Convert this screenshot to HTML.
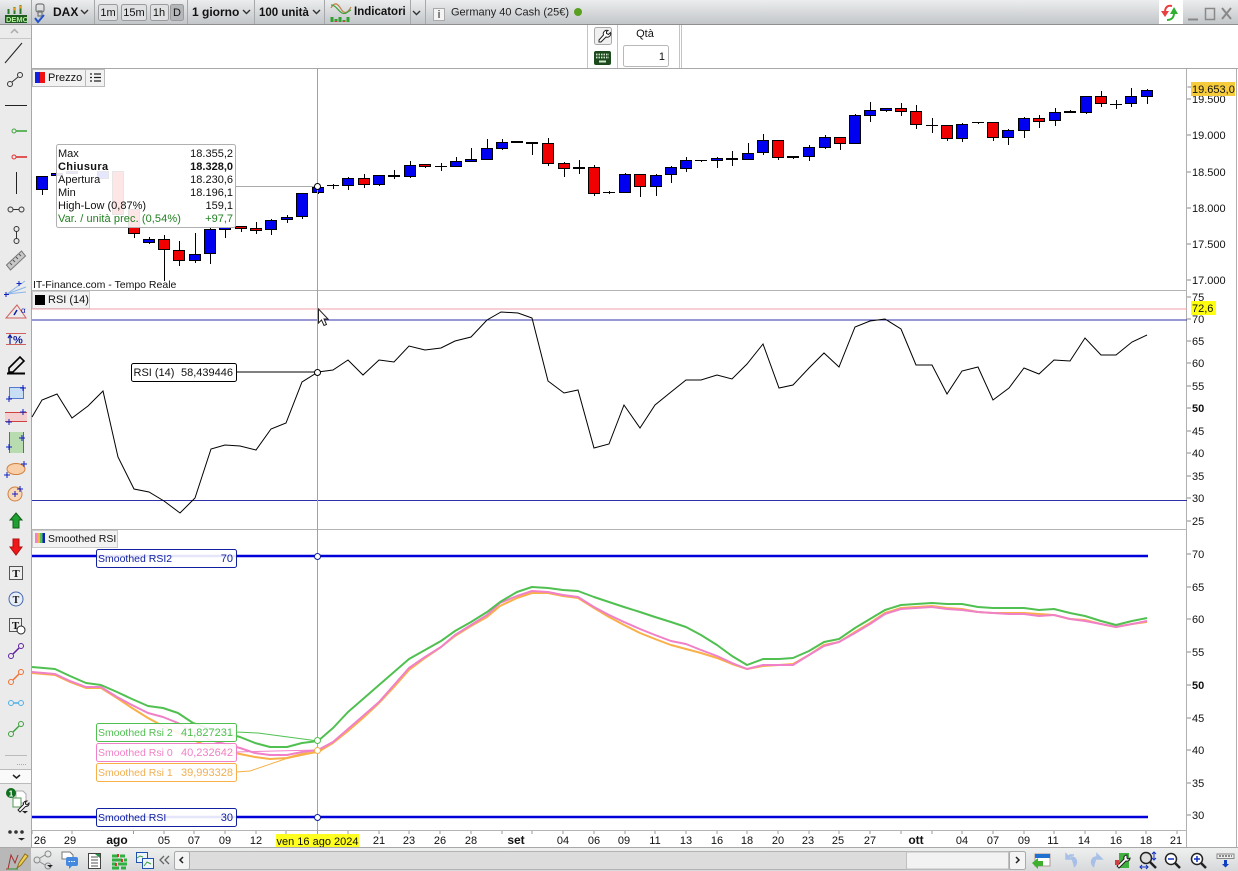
<!DOCTYPE html>
<html lang="it"><head><meta charset="utf-8"><title>DAX</title>
<style>html,body{margin:0;padding:0;background:#fff;width:1238px;height:871px;overflow:hidden}svg{display:block}text{font-family:"Liberation Sans",sans-serif;font-size:11px;fill:#111}.b{font-weight:bold}.e{text-anchor:end}.m{text-anchor:middle}.s{font-size:12px;font-weight:bold}.n{font-size:10.5px}</style></head><body>
<svg width="1238" height="871" viewBox="0 0 1238 871" xmlns="http://www.w3.org/2000/svg">
<defs>
<linearGradient id="g" x1="0" y1="0" x2="0" y2="1"><stop offset="0" stop-color="#ebedee"/><stop offset="1" stop-color="#c3c6c9"/></linearGradient>
<linearGradient id="g2" x1="0" y1="0" x2="0" y2="1"><stop offset="0" stop-color="#f0f0f0"/><stop offset="1" stop-color="#d8d9da"/></linearGradient>
<linearGradient id="rb" x1="0" y1="0" x2="1" y2="0"><stop offset=".5" stop-color="#1020e0"/><stop offset=".5" stop-color="#f01010"/></linearGradient>
</defs>
<rect width="1238" height="871" fill="#fff"/>
<!-- left toolbar -->
<rect x="0" y="25" width="31" height="822" fill="#ebebeb"/>
<path d="M31.5 25V847" stroke="#a8a8a8"/>
<!-- top bar -->
<rect width="1238" height="24" fill="url(#g)"/>
<path d="M0 24.5H1238" stroke="#8f8f8f"/>
<path d="M31.5 0V24M94.5 0V24M187.5 0V24M254.5 0V24M324.5 0V24M410.5 0V24M425.5 0V24" stroke="#a6a8aa"/>
<!-- demo icon -->
<rect x="5" y="15" width="22" height="8" fill="#1d5a1d"/><text x="6" y="22" style="font-size:7.5px;font-weight:bold;fill:#b8f0a0">DEMO</text>
<path d="M8.5 9V14M14.5 7V14M20.5 5V14" stroke="#2b7a2b" stroke-width="2"/><circle cx="14.5" cy="9" r="1.5" fill="#e8a020"/><circle cx="20.5" cy="7" r="1.5" fill="#e8a020"/>
<!-- link icon -->
<path d="M38 4h4a2 2 0 012 2v4a2 2 0 01-2 2h-4a2 2 0 01-2-2V6a2 2 0 012-2zM38 11h4v5h-4z" fill="none" stroke="#777" stroke-width="1.2"/>
<path d="M35 18l3 4 6-7" fill="none" stroke="#2255cc" stroke-width="2"/>
<text x="53" y="16" class="s">DAX</text>
<path d="M81 10l3.5 3.5L88 10" fill="none" stroke="#333" stroke-width="1.4"/>
<g fill="#dfe1e2" stroke="#9a9c9e"><rect x="98.5" y="4.5" width="19" height="16" rx="2"/><rect x="121.5" y="4.5" width="25" height="16" rx="2"/><rect x="150.5" y="4.5" width="18" height="16" rx="2"/><rect x="170.5" y="4.5" width="13" height="16" rx="2" fill="#b4b7b9"/></g>
<text x="108" y="16" class="m">1m</text><text x="134" y="16" class="m">15m</text><text x="159" y="16" class="m">1h</text><text x="177" y="16" class="m">D</text>
<text x="192" y="16" class="s">1 giorno</text><path d="M243 10l3.5 3.5L250 10" fill="none" stroke="#333" stroke-width="1.4"/>
<text x="259" y="16" class="s" style="font-size:11.5px">100 unità</text><path d="M313 10l3.5 3.5L320 10" fill="none" stroke="#333" stroke-width="1.4"/>
<path d="M331 8c4-7 7-4 10 1s6 5 10-2" fill="none" stroke="#c08040" stroke-width="1.2"/><path d="M331 5c5 0 7 6 11 8s6-2 9-3" fill="none" stroke="#40a040" stroke-width="1.2"/>
<path d="M332 22v-5M336 22v-3M340 22v-5M344 22v-2M348 22v-5" stroke="#30a030" stroke-width="3"/><path d="M336 22v-1M344 22v-1" stroke="#d04040" stroke-width="3"/>
<text x="354" y="15" class="s" style="font-size:11.5px">Indicatori</text><path d="M413 11l3.5 3.5L420 11" fill="none" stroke="#333" stroke-width="1.4"/>
<rect x="433.5" y="8.5" width="11" height="12" fill="#f4f4f4" stroke="#aaa"/><text x="439" y="18" class="m" style="fill:#666;font-weight:bold">i</text>
<text x="451" y="15.500" style="fill:#222">Germany 40 Cash (25€)</text>
<circle cx="578" cy="12" r="4" fill="#5aa020"/>
<!-- right window -->
<rect x="1159" y="0" width="24" height="24" fill="#fff"/>
<path d="M1172 6C1167 5 1165 8 1165 12" fill="none" stroke="#e84040" stroke-width="2"/><path d="M1161 11h8l-4 6z" fill="#e84040"/>
<path d="M1167 20C1172 20 1174 17 1174 13" fill="none" stroke="#30b030" stroke-width="2"/><path d="M1170 14h8l-4-7z" fill="#30b030"/>
<path d="M1188 19.500h10" stroke="#888" stroke-width="2"/><rect x="1205.500" y="8.500" width="9" height="11" fill="none" stroke="#888" stroke-width="1.500"/><path d="M1222 8l9 11M1231 8l-9 11" stroke="#888" stroke-width="2"/>
<!-- second row -->
<path d="M31 68.500H1238" stroke="#a8a8a8"/>
<path d="M587.500 25V68M617.500 25V68M679.500 25V68M681.500 25V68" stroke="#c4c4c4"/>
<rect x="594.500" y="27.500" width="17" height="17" rx="2" fill="#f0f0f0" stroke="#aaa"/>
<path d="M608 30.500a3.500 3.500 0 00-4.500 4.500l-4.500 5v2h2l5-5a3.500 3.500 0 004.500-4.500l-2 2-2-1v-2z" fill="#fff" stroke="#222"/>
<rect x="594" y="51" width="17" height="14" rx="2" fill="#1d4a1d"/><path d="M596 54.500h13M596 57.500h13" stroke="#cfe6cf" stroke-width="1.800" stroke-dasharray="1.500 1"/><path d="M599 61.500h7" stroke="#cfe6cf" stroke-width="2"/>
<text x="645" y="37" class="m">Qtà</text>
<rect x="623.500" y="45.500" width="45" height="21" rx="2" fill="#fff" stroke="#b8b8b8"/><text x="665" y="60" class="e">1</text>
<!-- axis lines -->
<path d="M1186.500 69V847M1236.500 69V847" stroke="#b0b0b0"/>
<path d="M31 290.500H1187M31 529.500H1187M31 830.500H1187" stroke="#b4b4b4"/>
<path d="M1187.500 87H1191M1187 99H1191M1187 135H1191M1187 172H1191M1187 208H1191M1187 244H1191M1187 280H1191M1187 297H1191M1187 319H1191M1187 341H1191M1187 363H1191M1187 386H1191M1187 408H1191M1187 431H1191M1187 453H1191M1187 476H1191M1187 498H1191M1187 521H1191M1187 554H1191M1187 587H1191M1187 619H1191M1187 652H1191M1187 685H1191M1187 718H1191M1187 750H1191M1187 783H1191M1187 815H1191" stroke="#888" stroke-width="1" shape-rendering="crispEdges"/>
<g style="fill:#222">
<text x="1192" y="103">19.500</text><text x="1192" y="139">19.000</text><text x="1192" y="176">18.500</text><text x="1192" y="212">18.000</text><text x="1192" y="248">17.500</text><text x="1192" y="284">17.000</text>
<text x="1192" y="301">75</text><text x="1192" y="323">70</text><text x="1192" y="345">65</text><text x="1192" y="367">60</text><text x="1192" y="390">55</text><text x="1192" y="412" class="b">50</text><text x="1192" y="435">45</text><text x="1192" y="457">40</text><text x="1192" y="480">35</text><text x="1192" y="502">30</text><text x="1192" y="525">25</text>
<text x="1192" y="558">70</text><text x="1192" y="591">65</text><text x="1192" y="623">60</text><text x="1192" y="656">55</text><text x="1192" y="689" class="b">50</text><text x="1192" y="722">45</text><text x="1192" y="754">40</text><text x="1192" y="787">35</text><text x="1192" y="819">30</text>
</g>
<rect x="1191" y="82" width="44" height="14" fill="#f6cc3c"/><text x="1192" y="93">19.653,0</text>
<rect x="1191" y="301" width="25" height="14" fill="#ffff10"/><text x="1192" y="312">72,6</text>
<!-- candles -->
<g fill="none" stroke="#000" stroke-width="1" shape-rendering="crispEdges">
<path d="M42.500 176V195M134.500 205V238M149.500 237V244M164.500 235V281M179.500 241V266M195.500 233V263M210.500 228V264M225.500 227V238M241.500 226V232M256.500 222V234M271.500 219V235M287.500 215V223M302.500 193V219M318.500 184V194M333.500 184V189M348.500 177V190M364.500 174V188M379.500 175V186M394.500 170V179M410.500 161V178M425.500 164V168M441.500 163V171M456.500 157V167M471.500 148V162M487.500 139V160M502.500 139V150M517.500 141V143M532.500 142V155M548.500 138V166M564.500 162V177M579.500 160V174M594.500 165V196M609.500 191V194M625.500 173V193M640.500 174V197M656.500 174V196M671.500 166V183M686.500 157V172M701.500 160V162M717.500 157V168M732.500 151V166M748.500 143V160M763.500 134V155M778.500 140V160M793.500 156V159M809.500 145V161M825.500 135V149M840.500 137V150M855.500 114V144M870.500 102V122M886.500 108V112M901.500 103V116M916.500 105V129M932.500 118V133M947.500 125V141M962.500 123V142M978.500 122V124M993.500 122V141M1008.500 129V145M1024.500 117V138M1039.500 115V128M1055.500 108V126M1070.500 110V113M1086.500 96V114M1101.500 91V107M1116.500 100V109M1131.500 88V107M1147.500 89V104"/>
<path fill="#0000f0" d="M36.500 176.500h11v13h-11zM51.500 173.500h11v2h-11zM66.500 171.500h11v2h-11zM97.500 171.500h11v7h-11zM143.500 239.500h11v3h-11zM189.500 254.500h11v6h-11zM204.500 229.500h11v24h-11zM219.500 227.500h11v2h-11zM265.500 220.500h11v9h-11zM281.500 217.500h11v2h-11zM296.500 193.500h11v23h-11zM312.500 187.500h11v5h-11zM342.500 178.500h11v7h-11zM373.500 175.500h11v9h-11zM404.500 165.500h11v11h-11zM450.500 161.500h11v5h-11zM465.500 159.500h11v2h-11zM481.500 148.500h11v11h-11zM496.500 142.500h11v6h-11zM619.500 174.500h11v18h-11zM650.500 175.500h11v11h-11zM665.500 167.500h11v7h-11zM680.500 160.500h11v8h-11zM711.500 158.500h11v2h-11zM742.500 153.500h11v6h-11zM757.500 140.500h11v12h-11zM803.500 147.500h11v9h-11zM819.500 137.500h11v10h-11zM849.500 115.500h11v28h-11zM864.500 110.500h11v5h-11zM880.500 108.500h11v2h-11zM956.500 124.500h11v14h-11zM1002.500 130.500h11v7h-11zM1018.500 118.500h11v12h-11zM1049.500 112.500h11v8h-11zM1080.500 96.500h11v16h-11zM1125.500 96.500h11v7h-11zM1141.500 90.500h11v6h-11z"/>
<path fill="#f00000" d="M112.500 171.500h11v43h-11zM128.500 209.500h11v24h-11zM158.500 239.500h11v10h-11zM173.500 250.500h11v10h-11zM235.500 226.500h11v2h-11zM250.500 228.500h11v2h-11zM358.500 178.500h11v6h-11zM419.500 164.500h11v2h-11zM542.500 143.500h11v20h-11zM558.500 163.500h11v5h-11zM588.500 167.500h11v26h-11zM634.500 174.500h11v12h-11zM772.500 140.500h11v17h-11zM834.500 137.500h11v6h-11zM895.500 108.500h11v3h-11zM910.500 111.500h11v13h-11zM941.500 125.500h11v13h-11zM987.500 122.500h11v15h-11zM1033.500 118.500h11v3h-11zM1095.500 96.500h11v7h-11z"/>
<path d="M327 185.500h12M435 166.500h12M603 192.500h12M695 160.500h12M926 125.500h12M972 122.500h12M1110 104.500h12"/>
<path stroke-width="2" d="M388 176h12M511 142h12M526 143h12M573 168h12M726 159h12M787 157h12M1064 112h12"/>
</g>
<!-- tooltip -->
<rect x="56.500" y="144.500" width="179" height="83" rx="2" fill="#fff" fill-opacity=".9" stroke="#b0b0b0"/>
<path d="M236 186.500H318" stroke="#aaa"/>
<text x="58" y="157">Max</text><text x="233" y="157" class="e">18.355,2</text>
<text x="58" y="170" class="b" style="letter-spacing:.35px">Chiusura</text><text x="233" y="170" class="e b">18.328,0</text>
<text x="58" y="183">Apertura</text><text x="233" y="183" class="e">18.230,6</text>
<text x="58" y="196">Min</text><text x="233" y="196" class="e">18.196,1</text>
<text x="58" y="209">High-Low (0,87%)</text><text x="233" y="209" class="e">159,1</text>
<text x="58" y="222" style="fill:#208020;letter-spacing:.08px">Var. / unità prec. (0,54%)</text><text x="233" y="222" class="e" style="fill:#208020">+97,7</text>
<text x="33" y="288" style="font-size:10.500px">IT-Finance.com - Tempo Reale</text>
<!-- tabs -->
<rect x="32.500" y="69.500" width="53" height="17" fill="#f2f2f2" stroke="#bbb"/><rect x="35" y="72" width="10" height="11" fill="url(#rb)"/><text x="48" y="81">Prezzo</text>
<rect x="85.500" y="69.500" width="19" height="17" fill="#f2f2f2" stroke="#bbb"/><path d="M90 74h2M94 74h7M90 77.500h2M94 77.500h7M90 81h2M94 81h7" stroke="#222" stroke-width="1.200"/>
<rect x="32.500" y="291.500" width="57" height="17" fill="#f2f2f2" stroke="#ccc"/><rect x="35" y="295" width="10" height="10" fill="#000"/><text x="48" y="303">RSI (14)</text>
<rect x="32.500" y="530.500" width="85" height="17" fill="#f2f2f2" stroke="#ccc"/><rect x="35" y="533" width="2.500" height="10" fill="#f080c8"/><rect x="37.500" y="533" width="2.500" height="10" fill="#f8b048"/><rect x="40" y="533" width="2.500" height="10" fill="#50c050"/><rect x="42.500" y="533" width="2.500" height="10" fill="#1020c0"/><text x="48" y="542" class="n">Smoothed RSI</text>
<!-- RSI panel lines -->
<path d="M32 309H1187" stroke="#f0a0a8" shape-rendering="crispEdges"/>
<path d="M32 320H1187M32 500.500H1187" stroke="#3030a8" shape-rendering="crispEdges"/>
<polyline fill="none" stroke="#000" points="32,417 42,400 57,394 72,418 88,406 103,391 118,457 134,489 149,492 164,501 180,513 195,498 211,449 225,445 240,446 256,450 271,429 286,423 302,382 318,372 333,370 348,360 363,375 379,360 394,362 409,346 425,350 441,348 455,341 471,337 487,320 501,312 518,313 532,318 548,381 564,393 578,390 594,448 609,444 624,405 640,428 655,405 671,392 686,380 701,380 717,375 732,379 747,364 763,344 779,388 793,385 809,368 824,353 839,367 855,327 870,321 885,319 901,329 916,365 932,365 947,394 962,371 978,367 993,400 1009,388 1024,368 1039,374 1054,360 1070,361 1085,338 1101,355 1116,355 1132,342 1147,335"/>
<path d="M236 372H318" stroke="#000"/>
<rect x="131.500" y="363.500" width="105" height="18" rx="2" fill="#fff" stroke="#000"/>
<text x="133.500" y="376">RSI (14)</text><text x="233" y="376" class="e">58,439446</text>
<!-- smoothed lines -->
<path d="M32 556H1148M32 817H1148" stroke="#0000d8" stroke-width="2.500"/>
<g fill="none" stroke-width="2" stroke-linejoin="round">
<polyline stroke="#f8b048" points="32,673 55,675 70,682 86,688 101,688 117,698 132,708 148,718 163,726 178,733 193,740 210,747 225,751 240,754 255,757 270,759 287,758 302,754 318,752 333,743 348,731 363,718 379,703 394,687 409,670 425,658 441,647 455,636 471,626 487,617 500,606 517,598 532,593 548,593 563,596 578,598 594,608 609,617 624,625 640,633 655,639 671,645 686,649 701,653 717,658 732,664 747,669 763,666 779,665 793,664 809,655 824,645 839,642 855,632 870,623 885,613 901,608 916,607 932,606 947,608 962,609 978,612 993,613 1009,613 1024,613 1039,614 1054,615 1070,619 1085,620 1101,624 1116,627 1132,624 1147,622"/>
<polyline stroke="#f080c8" points="32,672 55,674 70,681 86,687 101,687 117,697 132,705 148,713 163,717 178,723 193,732 210,740 225,744 240,748 255,753 270,755 287,755 302,752 318,750 333,742 348,729 363,716 379,702 394,685 409,668 425,657 441,647 455,635 471,625 487,615 500,603 517,596 532,591 548,592 563,595 578,597 594,607 609,615 624,622 640,629 655,635 671,641 686,644 701,650 717,656 732,663 747,669 763,665 779,665 793,665 809,655 824,646 839,642 855,633 870,624 885,614 901,609 916,608 932,607 947,609 962,610 978,612 993,613 1009,614 1024,614 1039,616 1054,615 1070,619 1085,621 1101,624 1116,627 1132,624 1147,621"/>
<polyline stroke="#50c050" points="32,667 55,669 70,676 86,683 101,685 117,692 132,699 148,706 163,708 178,713 193,723 210,729 225,733 240,737 255,743 270,747 287,747 302,743 318,741 333,728 348,712 363,699 379,685 394,672 409,659 425,650 441,641 455,631 471,622 487,612 500,602 517,592 532,587 548,588 563,590 578,591 594,597 609,602 624,607 640,612 655,617 671,622 686,627 701,635 717,645 732,656 747,665 763,659 779,659 793,658 809,651 824,642 839,639 855,628 870,619 885,610 901,605 916,604 932,603 947,604 962,604 978,607 993,608 1009,608 1024,608 1039,610 1054,609 1070,613 1085,616 1101,621 1116,625 1132,621 1147,618"/>
</g>
<path d="M236 732L258 733L318 741" fill="none" stroke="#50c050"/>
<path d="M236 752L318 750" fill="none" stroke="#f080c8"/>
<path d="M236 772L250 771L285 759L318 752" fill="none" stroke="#f8b048"/>
<!-- crosshair -->
<rect x="317" y="69" width="1" height="762" fill="#f47a98"/>
<!-- tags -->
<g fill="#fff" fill-opacity=".9" stroke-width="1">
<rect x="96.500" y="549.500" width="140" height="18" rx="2" stroke="#1020a0"/>
<rect x="96.500" y="723.500" width="140" height="18" rx="2" stroke="#50c050"/>
<rect x="96.500" y="743.500" width="140" height="18" rx="2" stroke="#f080c8"/>
<rect x="96.500" y="763.500" width="140" height="18" rx="2" stroke="#f8b048"/>
<rect x="96.500" y="808.500" width="140" height="18" rx="2" stroke="#1020a0"/>
</g>
<text x="98" y="562" class="n" style="fill:#1020a0">Smoothed RSI2</text><text x="233" y="562" class="e" style="fill:#1020a0">70</text>
<text x="98" y="736" class="n" style="fill:#50c050">Smoothed Rsi 2</text><text x="233" y="736" class="e" style="fill:#50c050">41,827231</text>
<text x="98" y="756" class="n" style="fill:#f080c8">Smoothed Rsi 0</text><text x="233" y="756" class="e" style="fill:#f080c8">40,232642</text>
<text x="98" y="776" class="n" style="fill:#f0b050">Smoothed Rsi 1</text><text x="233" y="776" class="e" style="fill:#f0b050">39,993328</text>
<text x="98" y="821" class="n" style="fill:#1020a0">Smoothed RSI</text><text x="233" y="821" class="e" style="fill:#1020a0">30</text>
<!-- markers -->
<g fill="#fff" stroke-width="1">
<circle cx="317.500" cy="186.500" r="3" stroke="#000"/><circle cx="317.500" cy="372.500" r="3" stroke="#000"/>
<circle cx="317.500" cy="556.500" r="3" stroke="#1020a0"/><circle cx="317.500" cy="740.500" r="3" stroke="#50c050"/><circle cx="317.500" cy="750.500" r="3" stroke="#f8b048"/><circle cx="317.500" cy="817.500" r="3" stroke="#1020a0"/>
</g>
<!-- cursor -->
<path d="M318.500 309v14l3-3 2.500 5.500 2.500-1-2.500-5.500h4z" fill="#fff" stroke="#222"/>
<!-- date axis -->
<g style="fill:#222">
<path d="M32 831v3M72 831v3M133.500 831v3M164 831v3M194 831v3M225 831v3M256 831v3M286 831v3M317.500 831v5M348 831v3M379 831v3M409 831v3M440 831v3M471 831v3M502 831v3M532 831v3M563 831v3M594 831v3M625 831v3M655 831v3M686 831v3M717 831v3M747 831v3M778 831v3M809 831v3M839 831v3M870 831v3M901 831v3M932 831v3M962 831v3M993 831v3M1024 831v3M1054 831v3M1085 831v3M1116 831v3M1146 831v3M1177 831v3" stroke="#999" shape-rendering="crispEdges"/>
<text x="40" y="844" class="m">26</text><text x="70" y="844" class="m">29</text><text x="117" y="844" class="m b" style="font-size:12px">ago</text><text x="164" y="844" class="m">05</text><text x="194" y="844" class="m">07</text><text x="225" y="844" class="m">09</text><text x="256" y="844" class="m">12</text><text x="379" y="844" class="m">21</text><text x="409" y="844" class="m">23</text><text x="440" y="844" class="m">26</text><text x="471" y="844" class="m">28</text><text x="516" y="844" class="m b" style="font-size:12px">set</text><text x="563" y="844" class="m">04</text><text x="594" y="844" class="m">06</text><text x="624" y="844" class="m">09</text><text x="655" y="844" class="m">11</text><text x="686" y="844" class="m">13</text><text x="717" y="844" class="m">16</text><text x="747" y="844" class="m">18</text><text x="778" y="844" class="m">20</text><text x="808" y="844" class="m">23</text><text x="838" y="844" class="m">25</text><text x="870" y="844" class="m">27</text><text x="916" y="844" class="m b" style="font-size:12px">ott</text><text x="962" y="844" class="m">04</text><text x="993" y="844" class="m">07</text><text x="1024" y="844" class="m">09</text><text x="1053" y="844" class="m">11</text><text x="1084" y="844" class="m">14</text><text x="1116" y="844" class="m">16</text><text x="1146" y="844" class="m">18</text><text x="1176" y="844" class="m">21</text>
</g>
<rect x="276" y="834" width="83" height="13" fill="#ffff20"/><text x="317.500" y="845" class="m">ven 16 ago 2024</text>
<!-- left toolbar icons -->
<path d="M0 38.500H31" stroke="#c8c8c8"/><path d="M11 33l3.500-3.500L18 33" fill="none" stroke="#aaa" stroke-width="1.500"/>
<path d="M5 63L22 43" stroke="#222" stroke-width="1"/>
<circle cx="10" cy="84" r="2.500" fill="none" stroke="#333"/><circle cx="20" cy="75" r="2.500" fill="none" stroke="#333"/><path d="M12 82l6-5" stroke="#333"/>
<path d="M5 105.500H27" stroke="#222"/>
<circle cx="14" cy="131" r="2" fill="none" stroke="#40a840"/><path d="M16 131H27" stroke="#40a840" stroke-width="1.600"/>
<circle cx="14" cy="157" r="2" fill="none" stroke="#e03030"/><path d="M16 157H27" stroke="#e03030" stroke-width="1.600"/>
<path d="M16.500 172V194" stroke="#222"/>
<circle cx="10.500" cy="209.500" r="2.500" fill="none" stroke="#333"/><circle cx="21.500" cy="209.500" r="2.500" fill="none" stroke="#333"/><path d="M13 209.500h6" stroke="#333"/>
<circle cx="16.500" cy="229" r="2.500" fill="none" stroke="#333"/><circle cx="16.500" cy="241" r="2.500" fill="none" stroke="#333"/><path d="M16.500 231v8" stroke="#333"/>
<path d="M6.500 265l15-14 4 5-15 14z" fill="#c8c8c8" stroke="#777"/><path d="M10 263l2 2M13 260l2 2M16 257l2 2M19 254l2 2" stroke="#555"/>
<path d="M7 294L25 281M7 294L26 287M7 294L26 292" stroke="#8ab4e8"/><path d="M6 292v5M4 294.500h5M19 281v5M16.500 283.500h5" stroke="#1020c0"/>
<path d="M6 318h20L17 305z" fill="none" stroke="#d06060"/><path d="M14 315l3-5" stroke="#1020a0" stroke-width="1.500"/><text x="21" y="313" style="font-size:8px;fill:#1020a0">α</text>
<path d="M6 333.500H26M6 344.500H26" stroke="#d06060"/><path d="M10 344v-9M8 338l2-3 2 3" fill="none" stroke="#1020a0" stroke-width="1.200"/><text x="13" y="343.500" style="font-size:11px;font-weight:bold;fill:#1020a0">%</text>
<path d="M9 368l11-11 4 4-11 11H9z" fill="none" stroke="#000" stroke-width="1.600"/><path d="M7 373.500h18" stroke="#000" stroke-width="2"/>
<rect x="9.500" y="387.500" width="14" height="11" fill="#c8def4" stroke="#5577cc"/><path d="M9 396v6M6 399h6M23 385v6M20 388h6" stroke="#1020c0"/>
<rect x="5" y="412" width="22" height="10" fill="#f4cfcf"/><path d="M5 412.500H27M5 421.500H27" stroke="#d04040"/><path d="M9 419v6M6 422h6M23 409v6M20 412h6" stroke="#1020c0"/>
<rect x="9" y="432" width="14" height="21" fill="#b8dcb0"/><path d="M9.500 432v21M23.500 432v21" stroke="#309030"/><path d="M9 444v6M6 447h6M22 435v6M19 438h6" stroke="#1020c0"/>
<ellipse cx="16" cy="469" rx="9" ry="5.500" fill="#f8cfa8" stroke="#d08040"/><path d="M7 472v6M4 475h6M24 461v6M21 464h6" stroke="#1020c0"/>
<circle cx="15" cy="494" r="7" fill="#f8d8b8" stroke="#d08040"/><path d="M15 491v6M12 494h6M20 486v6M17 489h6" stroke="#1020c0"/>
<path d="M16 513l6 7h-3v8h-6v-8h-3z" fill="#20a030" stroke="#106018"/>
<path d="M13 539h6v8h3l-6 8-6-8h3z" fill="#f01818" stroke="#b01010"/>
<rect x="9.500" y="566.500" width="13" height="13" fill="#eee" stroke="#555"/><text x="16" y="577" class="m" style="font-size:11px;font-weight:bold;font-family:'Liberation Serif',serif">T</text>
<circle cx="16" cy="599" r="7" fill="#e8eef8" stroke="#4466aa"/><text x="16" y="603" class="m" style="font-size:10px;font-weight:bold;font-family:'Liberation Serif',serif">T</text>
<rect x="9.500" y="618.500" width="12" height="13" fill="#eee" stroke="#555"/><text x="15.500" y="629" class="m" style="font-size:11px;font-weight:bold;font-family:'Liberation Serif',serif">T</text><circle cx="21" cy="630" r="4" fill="#fff" stroke="#222"/>
<circle cx="11" cy="656" r="2.500" fill="none" stroke="#6020a0"/><circle cx="21" cy="646" r="2.500" fill="none" stroke="#6020a0"/><path d="M13 654l6-6" stroke="#6020a0" stroke-width="1.500"/>
<circle cx="11" cy="682" r="2.500" fill="none" stroke="#f07030"/><circle cx="21" cy="672" r="2.500" fill="none" stroke="#f07030"/><path d="M13 680l6-6" stroke="#f07030" stroke-width="1.500"/>
<circle cx="11" cy="703" r="2.500" fill="none" stroke="#50b0e8"/><circle cx="21" cy="703" r="2.500" fill="none" stroke="#50b0e8"/><path d="M13 703h6" stroke="#50b0e8" stroke-width="1.500"/>
<circle cx="11" cy="734" r="2.500" fill="none" stroke="#40a040"/><circle cx="21" cy="724" r="2.500" fill="none" stroke="#40a040"/><path d="M13 732l6-6" stroke="#40a040" stroke-width="1.500"/>
<path d="M5 755.500H27" stroke="#bbb"/><path d="M17 764.500h9" stroke="#aaa" stroke-dasharray="1 1"/>
<rect x="0" y="770" width="31" height="13" fill="#fafafa"/><path d="M0 769.500H31M0 783.500H31" stroke="#bbb"/><path d="M13 775l3.500 3 3.500-3" fill="none" stroke="#222" stroke-width="1.500"/>
<path d="M16 791h7l3 3v9H16z" fill="#fff" stroke="#aaa"/><circle cx="11" cy="793" r="5" fill="#107020"/><text x="11" y="796.500" class="m" style="font-size:8px;font-weight:bold;fill:#fff">1</text>
<path d="M13 798h8v9h-8z" fill="#fff" stroke="#559955"/><path d="M27 801a3 3 0 00-3.500 3.500L18 810l2 2 5.500-5.500a3 3 0 003.500-3.500l-2 2-1.500-1v-2z" fill="#fff" stroke="#222"/><path d="M22 811h6l-3 2.500z" fill="#222"/>
<circle cx="10" cy="832" r="1.800" fill="#333"/><circle cx="16" cy="832" r="1.800" fill="#333"/><circle cx="22" cy="832" r="1.800" fill="#333"/><path d="M18 838h7l-3.500 2.500z" fill="#222"/>
<!-- bottom bar -->
<rect x="0" y="847" width="1238" height="24" fill="url(#g2)"/>
<path d="M0 847.500H1238" stroke="#a8a8a8"/>
<rect x="0" y="848" width="31" height="23" fill="#b8b8b8"/>
<path d="M8 869l3-14 4 8 3-8M6 869h10" fill="none" stroke="#a03030"/><path d="M17 868l2-5 6-9 3 2-7 9z" fill="#f0d050" stroke="#907020"/><path d="M7 869h11" stroke="#309030"/>
<circle cx="37" cy="860" r="3" fill="none" stroke="#888"/><circle cx="48" cy="854" r="3" fill="none" stroke="#888"/><circle cx="48" cy="866" r="3" fill="none" stroke="#888"/><path d="M40 858l5-3M40 862l5 3" stroke="#888"/><path d="M47 865h6l-3 2.500z" fill="#222"/>
<path d="M62 852h8l3 3v4H62z" fill="#fff" stroke="#777"/><rect x="66" y="857" width="12" height="9" rx="2" fill="#4488e0"/><path d="M69 866v3l3-3z" fill="#4488e0"/><path d="M68.500 861.500h7" stroke="#fff" stroke-dasharray="1.500 1"/>
<rect x="88.500" y="853.500" width="12" height="15" fill="#fff" stroke="#444"/><path d="M91 857h7M91 860h7M91 863h7M91 866h7" stroke="#555"/><path d="M95 854l5 0 0 4z" fill="#209040"/>
<path d="M112 856h6M120 856h5M112 860h10M124 860h3M112 864h4M118 864h9M112 868h7M121 868h5" stroke="#30b040" stroke-width="3"/><path d="M118 854v3M122 859v3M116 863v3" stroke="#e03030" stroke-width="2"/>
<rect x="136.500" y="852.500" width="11" height="10" fill="#eef4fb" stroke="#2050b0"/><rect x="142.500" y="858.500" width="11" height="10" fill="#eef4fb" stroke="#2050b0"/><path d="M137 858l3-2 3 1M144 866l3-4 4 2" fill="none" stroke="#40a040"/>
<path d="M164 856l-4 4 4 4M169 856l-4 4 4 4" fill="none" stroke="#666" stroke-width="1.300"/>
<rect x="174.500" y="851.500" width="851" height="18" rx="2" fill="#dcdcdc" stroke="#b4b4b4"/>
<rect x="906.500" y="852" width="102" height="17" fill="#f2f2f2" stroke="#c0c0c0"/>
<rect x="174.500" y="851.500" width="15" height="18" rx="2" fill="#f4f4f4" stroke="#aaa"/><path d="M183 857l-3 3 3 3" fill="none" stroke="#222" stroke-width="1.500"/>
<rect x="1009.500" y="851.500" width="16" height="18" rx="2" fill="#f4f4f4" stroke="#aaa"/><path d="M1016 857l3 3-3 3" fill="none" stroke="#222" stroke-width="1.500"/>
<rect x="1035" y="854" width="15" height="12" fill="#fff" stroke="#aa9999"/><rect x="1035" y="854" width="15" height="4" fill="#2070d0"/><path d="M1032 863l6-5v3h5v5h-5v3z" fill="#40b030"/>
<path d="M1066 859l4-4 4 0M1066 859h5l-5-5zM1071 857c6 0 7 6 3 10" fill="#a8c0e8" stroke="#a8c0e8" stroke-width="1.500"/>
<path d="M1102 859l-5-5v5zM1097 857c-6 0-7 6-3 10" fill="#a8c0e8" stroke="#a8c0e8" stroke-width="1.500"/>
<rect x="1119" y="853" width="10" height="15" fill="#40b040"/><path d="M1127 855a3 3 0 00-3 4l-7 7 2 2 7-7a3 3 0 004-3l-2 1-1-1v-2z" fill="#fff" stroke="#222"/><rect x="1115" y="860" width="4" height="5" fill="#d04040"/>
<circle cx="1146" cy="858" r="5.500" fill="#ddd" stroke="#222" stroke-width="1.500"/><path d="M1150 862l6 6" stroke="#222" stroke-width="2.500"/><path d="M1154 852v8M1152 854l2-2 2 2M1152 858l2 2 2-2M1140 867h8M1142 865l-2 2 2 2M1146 865l2 2-2 2" fill="none" stroke="#1030c0"/>
<circle cx="1171" cy="859" r="5.500" fill="#fff" stroke="#222" stroke-width="1.500"/><path d="M1175 863l5 5" stroke="#222" stroke-width="2.500"/><path d="M1168 859h6" stroke="#1030c0" stroke-width="1.500"/>
<circle cx="1197" cy="859" r="5.500" fill="#fff" stroke="#222" stroke-width="1.500"/><path d="M1201 863l5 5" stroke="#222" stroke-width="2.500"/><path d="M1194 859h6M1197 856v6" stroke="#1030c0" stroke-width="1.500"/>
<rect x="1217" y="854" width="17" height="4.500" fill="#eee" stroke="#888"/><path d="M1219 856h13" stroke="#222" stroke-dasharray="2 1"/><path d="M1224 860h3v4h2l-3.500 3.500L1222 864h2z" fill="#1040c0"/>
</svg>
</body></html>
